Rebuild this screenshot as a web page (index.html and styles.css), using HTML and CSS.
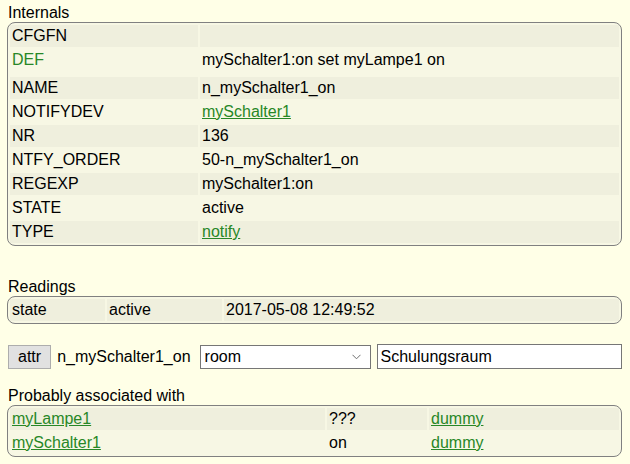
FILE: index.html
```html
<!DOCTYPE html>
<html>
<head>
<meta charset="utf-8">
<link rel="stylesheet" href="styles.css">
</head>
<body>
<div class="page">
  <div class="caption">Internals</div>
  <table class="block internals">
    <tr class="odd"><td class="c1">CFGFN</td><td></td></tr>
    <tr class="even"><td class="c1 dname tall">DEF</td><td class="tall">mySchalter1:on set myLampe1 on</td></tr>
    <tr class="odd"><td class="c1">NAME</td><td>n_mySchalter1_on</td></tr>
    <tr class="even"><td class="c1">NOTIFYDEV</td><td><a href="#">mySchalter1</a></td></tr>
    <tr class="odd"><td class="c1">NR</td><td>136</td></tr>
    <tr class="even"><td class="c1">NTFY_ORDER</td><td>50-n_mySchalter1_on</td></tr>
    <tr class="odd"><td class="c1">REGEXP</td><td>mySchalter1:on</td></tr>
    <tr class="even"><td class="c1">STATE</td><td>active</td></tr>
    <tr class="odd"><td class="c1">TYPE</td><td><a href="#">notify</a></td></tr>
  </table>

  <div class="caption readings-cap">Readings</div>
  <table class="block readings">
    <tr class="odd"><td class="r1">state</td><td class="r2">active</td><td>2017-05-08 12:49:52</td></tr>
  </table>

  <div class="attrrow">
    <button class="attrbtn">attr</button>
    <span class="devname">n_mySchalter1_on</span>
    <div class="selwrap">
      <select class="attrsel"><option>room</option></select>
      <svg class="chev" width="9" height="6" viewBox="0 0 9 6"><path d="M0.5 0.8 L4.5 4.8 L8.5 0.8" fill="none" stroke="#6e6e6e" stroke-width="1"/></svg>
    </div>
    <input class="attrval" type="text" value="Schulungsraum">
  </div>

  <div class="caption assoc-cap">Probably associated with</div>
  <table class="block assoc">
    <tr class="odd"><td class="a1"><a href="#">myLampe1</a></td><td class="a2">???</td><td><a href="#">dummy</a></td></tr>
    <tr class="even"><td class="a1"><a href="#">mySchalter1</a></td><td class="a2">on</td><td><a href="#">dummy</a></td></tr>
  </table>
</div>
</body>
</html>
```

FILE: styles.css
```css
html, body {
  margin: 0;
  padding: 0;
  background: #FFFFE7;
}
body {
  font-family: "Liberation Sans", Arial, sans-serif;
  font-size: 16px;
  color: #000;
}
.page {
  padding: 3px 8px 0 7px;
}
.caption {
  line-height: 19px;
  padding-left: 1px;
}
.block {
  width: 100%;
  border: 1px solid #808080;
  border-radius: 8px;
  background: #F7F7E4;
  border-spacing: 2px;
}
.block td {
  padding: 2px 2px;
  line-height: 18px;
  vertical-align: middle;
  white-space: nowrap;
}
.block td.tall {
  padding-top: 2px;
  padding-bottom: 6px;
}
.odd {
  background: #EFEFDD;
}
.even {
  background: #F7F7E4;
}
a {
  color: #278727;
  text-decoration: underline;
}
.dname {
  color: #278727;
}
.internals .c1 {
  width: 184px;
}
.readings-cap {
  margin-top: 31px;
}
.readings .r1 {
  width: 91px;
}
.readings .r2 {
  width: 111px;
}
.attrrow {
  display: flex;
  align-items: center;
  margin-top: 20px;
  height: 25px;
  padding-left: 1px;
}
.attrbtn {
  font-family: "Liberation Sans", Arial, sans-serif;
  font-size: 16px;
  line-height: 18px;
  height: 24px;
  padding: 1px 9px;
  background: #E1E1E1;
  border: 1px solid #ADADAD;
  border-radius: 0;
  color: #000;
  margin: 0;
}
.devname {
  margin-left: 6px;
  margin-right: 9px;
}
.selwrap {
  position: relative;
  width: 171px;
  height: 24px;
}
.attrsel {
  appearance: none;
  -webkit-appearance: none;
  width: 171px;
  height: 24px;
  margin: 0;
  padding: 0 0 0 4px;
  font-family: "Liberation Sans", Arial, sans-serif;
  font-size: 16px;
  color: #000;
  background: #fff;
  border: 1px solid #767676;
  border-radius: 0;
}
.chev {
  position: absolute;
  right: 10px;
  top: 9px;
}
.attrval {
  margin: 0 0 0 6px;
  width: 246px;
  height: 25px;
  box-sizing: border-box;
  padding: 0 3px;
  font-family: "Liberation Sans", Arial, sans-serif;
  font-size: 16px;
  color: #000;
  background: #fff;
  border: 1px solid #767676;
  border-radius: 0;
}
.assoc-cap {
  margin-top: 17px;
}
.assoc .a1 {
  width: 311px;
}
.assoc .a2 {
  width: 96px;
}
```
